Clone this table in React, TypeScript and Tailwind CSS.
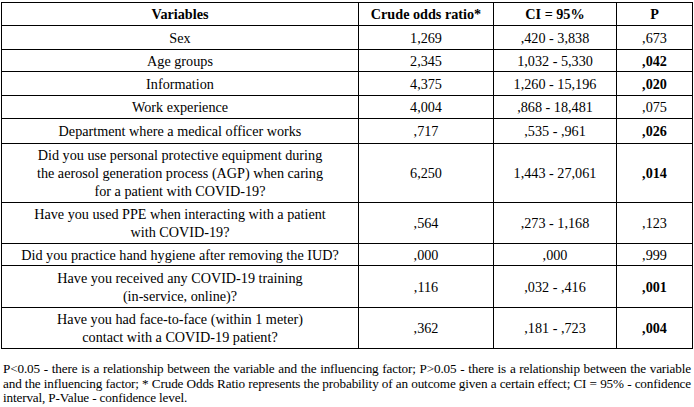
import React from "react";

type Row = { v: React.ReactNode; or: string; ci: string; p: string; bold?: boolean; h: number };

const rows: Row[] = [
  { v: "Sex", or: "1,269", ci: ",420 - 3,838", p: ",673", h: 24 },
  { v: "Age groups", or: "2,345", ci: "1,032 - 5,330", p: ",042", bold: true, h: 22 },
  { v: "Information", or: "4,375", ci: "1,260 - 15,196", p: ",020", bold: true, h: 24 },
  { v: "Work experience", or: "4,004", ci: ",868 - 18,481", p: ",075", h: 23 },
  { v: "Department where a medical officer works", or: ",717", ci: ",535 - ,961", p: ",026", bold: true, h: 25 },
  {
    v: (
      <>
        Did you use personal protective equipment during
        <br />
        the aerosol generation process (AGP) when caring
        <br />
        for a patient with COVID-19?
      </>
    ),
    or: "6,250",
    ci: "1,443 - 27,061",
    p: ",014",
    bold: true,
    h: 59,
  },
  {
    v: (
      <>
        Have you used PPE when interacting with a patient
        <br />
        with COVID-19?
      </>
    ),
    or: ",564",
    ci: ",273 - 1,168",
    p: ",123",
    h: 41,
  },
  { v: "Did you practice hand hygiene after removing the IUD?", or: ",000", ci: ",000", p: ",999", h: 22 },
  {
    v: (
      <>
        Have you received any COVID-19 training
        <br />
        (in-service, online)?
      </>
    ),
    or: ",116",
    ci: ",032 - ,416",
    p: ",001",
    bold: true,
    h: 42,
  },
  {
    v: (
      <>
        Have you had face-to-face (within 1 meter)
        <br />
        contact with a COVID-19 patient?
      </>
    ),
    or: ",362",
    ci: ",181 - ,723",
    p: ",004",
    bold: true,
    h: 41,
  },
];

export default function App() {
  const cell = "border border-black text-center align-middle p-0";
  return (
    <div className="w-[694px] h-[407px] bg-white text-black overflow-hidden font-['Liberation_Serif','Times_New_Roman','DejaVu_Serif',serif]">
      <table className="ml-[1px] mt-[2px] w-[691px] table-fixed border-collapse text-[14.2px] leading-[18px]">
        <colgroup>
          <col className="w-[357px]" />
          <col className="w-[135px]" />
          <col className="w-[123px]" />
          <col className="w-[76px]" />
        </colgroup>
        <thead>
          <tr className="h-[23px] font-bold">
            <th className={cell}>Variables</th>
            <th className={cell}>Crude odds ratio*</th>
            <th className={cell}>CI = 95%</th>
            <th className={cell}>P</th>
          </tr>
        </thead>
        <tbody>
          {rows.map((r, i) => (
            <tr key={i} style={{ height: r.h }}>
              <td className={cell}>{r.v}</td>
              <td className={cell}>{r.or}</td>
              <td className={cell}>{r.ci}</td>
              <td className={`${cell} ${r.bold ? "font-bold" : ""}`}>{r.p}</td>
            </tr>
          ))}
        </tbody>
      </table>
      <div className="mx-[3px] mt-[13px] text-[13.2px] leading-[14.5px] tracking-[-0.15px]">
        <p className="text-justify [text-align-last:justify] whitespace-nowrap">
          P&lt;0.05 - there is a relationship between the variable and the influencing factor; P&gt;0.05 - there is a relationship between the variable
        </p>
        <p className="text-justify [text-align-last:justify] whitespace-nowrap">
          and the influencing factor; * Crude Odds Ratio represents the probability of an outcome given a certain effect; CI = 95% - confidence
        </p>
        <p>interval, P-Value - confidence level.</p>
      </div>
    </div>
  );
}
